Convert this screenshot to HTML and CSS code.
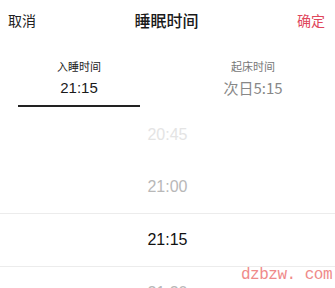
FILE: index.html
```html
<!DOCTYPE html>
<html>
<head>
<meta charset="utf-8">
<link rel="stylesheet" href="styles.css">
</head>
<body>
<div class="sheet">
  <div class="header">
    <span class="btn cancel">取消</span>
    <span class="title">睡眠时间</span>
    <span class="btn ok">确定</span>
  </div>
  <div class="tabs">
    <div class="tab active">
      <div class="tab-label">入睡时间</div>
      <div class="tab-value">21:15</div>
      <div class="tab-line"></div>
    </div>
    <div class="tab">
      <div class="tab-label">起床时间</div>
      <div class="tab-value">次日5:15</div>
      <div class="tab-line"></div>
    </div>
  </div>
  <div class="picker">
    <div class="row far">20:45</div>
    <div class="row near">21:00</div>
    <div class="row selected">21:15</div>
    <div class="row near">21:30</div>
  </div>
  <div class="watermark">dzbzw. com</div>
</div>
</body>
</html>
```
FILE: styles.css
```css
html, body {
  margin: 0;
  padding: 0;
  background: #fff;
}
body {
  font-family: "Noto Sans CJK SC", "Liberation Sans", sans-serif;
  width: 335px;
  height: 288px;
  overflow: hidden;
}
.sheet {
  position: relative;
  width: 335px;
  height: 288px;
  overflow: hidden;
}
.header {
  display: flex;
  align-items: center;
  justify-content: space-between;
  height: 40px;
  padding: 0 10px 0 8px;
}
.btn {
  font-size: 14px;
  color: #222;
  width: 40px;
}
.ok {
  color: #e0475c;
  text-align: right;
}
.title {
  font-size: 16px;
  font-weight: 500;
  color: #1a1a1a;
}
.tabs {
  display: flex;
  padding: 0 0 0 18px;
  gap: 52px;
}
.tab {
  width: 122px;
  display: flex;
  flex-direction: column;
  align-items: center;
}
.tab-label {
  font-size: 11px;
  color: #222;
  margin-top: 18px;
  line-height: 16px;
}
.tab-value {
  font-family: "Liberation Sans", "Noto Sans CJK SC", sans-serif;
  font-size: 15px;
  color: #1a1a1a;
  margin-top: 5px;
  line-height: 18px;
}
.tab:not(.active) .tab-label { color: #777; }
.tab:not(.active) .tab-value { color: #888; font-family: "Noto Sans CJK SC", sans-serif; font-size: 15px; }
.tab-line {
  width: 122px;
  height: 2px;
  margin-top: 8px;
}
.active .tab-line { background: #222; }
.picker {
  margin-top: 2px;
}
.row {
  height: 52px;
  display: flex;
  align-items: center;
  justify-content: center;
  font-family: "Liberation Sans", sans-serif;
  font-size: 16px;
}
.far { color: #e4e4e4; }
.near { color: #b8b8b8; }
.selected {
  color: #111;
  border-top: 1px solid #ececec;
  border-bottom: 1px solid #ececec;
}
.watermark {
  position: absolute;
  right: 3px;
  bottom: 4px;
  font-family: "Liberation Mono", monospace;
  font-size: 16px;
  color: #ef8a8a;
  letter-spacing: -0.5px;
  white-space: pre;
}
```
